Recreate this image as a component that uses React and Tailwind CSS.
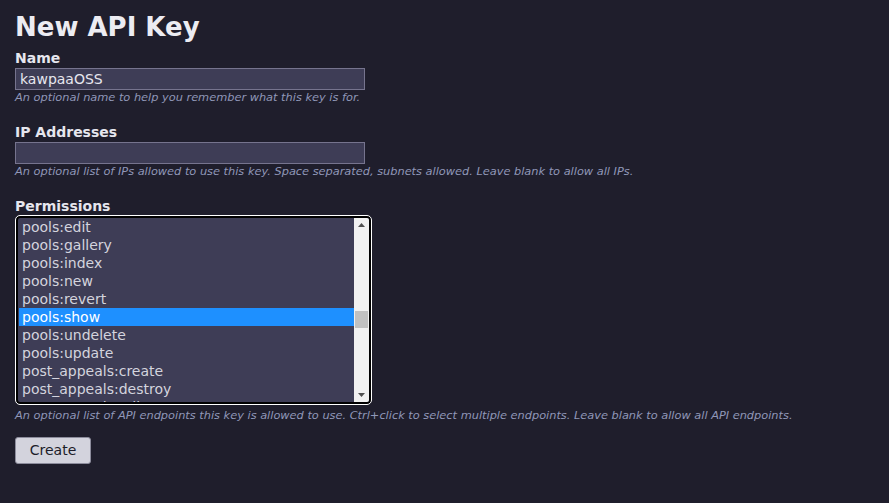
import React, { useState } from "react";

const permissions = [
  "pools:edit",
  "pools:gallery",
  "pools:index",
  "pools:new",
  "pools:revert",
  "pools:show",
  "pools:undelete",
  "pools:update",
  "post_appeals:create",
  "post_appeals:destroy",
  "post_appeals:edit",
];

const Field = ({ label, hint, children }) => (
  <div>
    <label className="block text-[14px] leading-4 font-bold text-[#e6e6ee] mb-[2px]">{label}</label>
    {children}
    <p className="text-[11.35px] leading-[15px] italic text-[#9097b8]">{hint}</p>
  </div>
);

const App = () => {
  const [name, setName] = useState("kawpaaOSS");
  const [ips, setIps] = useState("");
  const [selected, setSelected] = useState("pools:show");

  return (
    <div
      className="min-h-screen w-full bg-[#1f1e2c] pl-[15px] pt-[12px]"
      style={{ fontFamily: '"DejaVu Sans", Verdana, sans-serif' }}
    >
      <h1 className="text-[26px] leading-[30px] font-bold text-[#ececf2] mb-[8px]">New API Key</h1>

      <div className="flex flex-col gap-[19px]">
        <Field label="Name" hint="An optional name to help you remember what this key is for.">
          <input
            className="block w-[350px] h-[22px] bg-[#3e3d56] border border-[#76748e] px-[4px] text-[14px] text-[#e6e6ee] outline-none"
            value={name}
            onChange={(e) => setName(e.target.value)}
          />
        </Field>

        <Field
          label="IP Addresses"
          hint="An optional list of IPs allowed to use this key. Space separated, subnets allowed. Leave blank to allow all IPs."
        >
          <input
            className="block w-[350px] h-[22px] bg-[#3e3d56] border border-[#76748e] px-[4px] text-[14px] text-[#e6e6ee] outline-none"
            value={ips}
            onChange={(e) => setIps(e.target.value)}
          />
        </Field>

        <div>
          <label className="block text-[14px] leading-4 font-bold text-[#e6e6ee] mb-[2px]">Permissions</label>
          <div className="ml-[1px] mt-[1px] w-[355px] h-[188px] border-2 border-black rounded-[4px] outline outline-1 outline-white flex overflow-hidden bg-[#3e3d56]">
            <div className="flex-1 overflow-hidden">
              {permissions.map((p) => (
                <div
                  key={p}
                  onClick={() => setSelected(p)}
                  className={
                    p === selected
                      ? "h-[18px] leading-[18px] pl-[3px] ml-[1px] text-[14px] bg-[#1e90ff] text-white"
                      : "h-[18px] leading-[18px] pl-[3px] ml-[1px] text-[14px] text-[#d4d4de]"
                  }
                >
                  {p}
                </div>
              ))}
            </div>
            <div className="w-[15px] bg-[#f1f1f1] flex flex-col items-center">
              <svg width="15" height="14" viewBox="0 0 15 14" className="shrink-0">
                <path d="M4 9 L7.5 5 L11 9 Z" fill="#505050" />
              </svg>
              <div className="flex-1 w-full flex flex-col">
                <div className="h-[79px]" />
                <div className="mx-[1px] h-[17px] bg-[#c1c1c1]" />
              </div>
              <svg width="15" height="14" viewBox="0 0 15 14" className="shrink-0">
                <path d="M4 5 L11 5 L7.5 9 Z" fill="#505050" />
              </svg>
            </div>
          </div>
          <p className="mt-[4px] text-[11.35px] leading-[15px] italic text-[#9097b8]">
            An optional list of API endpoints this key is allowed to use. Ctrl+click to select multiple endpoints. Leave blank to allow all API endpoints.
          </p>
        </div>
      </div>

      <button className="mt-[14px] w-[76px] h-[27px] bg-[#d3d3dd] border border-[#8c8c9c] rounded-[3px] text-[14px] text-[#1c1c2a]">
        Create
      </button>
    </div>
  );
};

export default App;
